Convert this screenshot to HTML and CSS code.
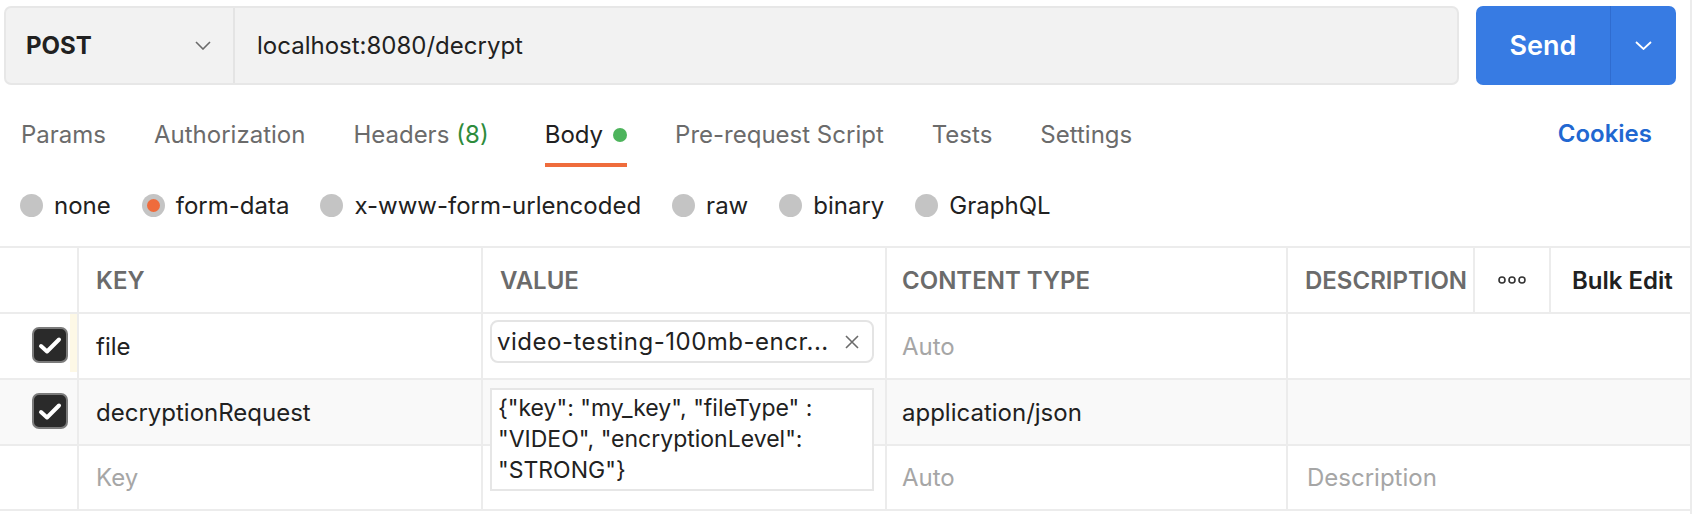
FILE: index.html
```html
<!DOCTYPE html>
<html lang="en">
<head>
<meta charset="utf-8">
<title>POST localhost:8080/decrypt</title>
<link rel="stylesheet" href="styles.css">
</head>
<body>
<div class="page">
  <div class="url-row">
    <div class="url-bar">
      <div class="method">
        <span class="method-name">POST</span>
        <svg class="chev" width="16" height="9" viewBox="0 0 16 9"><path d="M1 1 L8 8 L15 1" fill="none" stroke="#6b6b6b" stroke-width="1.6"/></svg>
      </div>
      <div class="url">localhost:8080/decrypt</div>
    </div>
    <div class="send">
      <span class="send-label">Send</span>
      <span class="send-arrow"><svg width="17" height="9" viewBox="0 0 17 9"><path d="M1 1 L8.5 8 L16 1" fill="none" stroke="#ffffff" stroke-width="1.8"/></svg></span>
    </div>
  </div>

  <div class="tabs">
    <div class="tab">Params</div>
    <div class="tab">Authorization</div>
    <div class="tab headers">Headers <span class="count">(8)</span></div>
    <div class="tab active">Body <span class="dot"></span></div>
    <div class="tab">Pre-request Script</div>
    <div class="tab">Tests</div>
    <div class="tab">Settings</div>
    <div class="tab-spacer"></div>
    <div class="cookies">Cookies</div>
  </div>

  <div class="body-types">
    <div class="radio"><span class="radio-dot"></span>none</div>
    <div class="radio"><span class="radio-dot selected"></span>form-data</div>
    <div class="radio"><span class="radio-dot"></span>x-www-form-urlencoded</div>
    <div class="radio"><span class="radio-dot"></span>raw</div>
    <div class="radio"><span class="radio-dot"></span>binary</div>
    <div class="radio"><span class="radio-dot"></span>GraphQL</div>
  </div>

  <div class="kv">
    <div class="cell head"></div>
    <div class="cell head">KEY</div>
    <div class="cell head">VALUE</div>
    <div class="cell head ct">CONTENT TYPE</div>
    <div class="cell head">DESCRIPTION</div>
    <div class="cell head center"><svg width="28" height="8" viewBox="0 0 28 8"><circle cx="4" cy="4" r="3" fill="none" stroke="#333" stroke-width="1.6"/><circle cx="14" cy="4" r="3" fill="none" stroke="#333" stroke-width="1.6"/><circle cx="24" cy="4" r="3" fill="none" stroke="#333" stroke-width="1.6"/></svg></div>
    <div class="cell head bulk">Bulk Edit</div>

    <div class="cell check-cell"><span class="check"><svg width="24" height="19" viewBox="0 0 24 19"><path d="M3 10 L9 15.5 L21 3.5" fill="none" stroke="#fff" stroke-width="4" stroke-linecap="round" stroke-linejoin="round"/></svg></span><span class="drag-strip"></span></div>
    <div class="cell">file</div>
    <div class="cell value-cell">
      <div class="file-chip"><span class="file-name">video-testing-100mb-encr...</span><svg class="chip-x" width="16" height="16" viewBox="0 0 16 16"><path d="M2 2 L14 14 M14 2 L2 14" fill="none" stroke="#6b6b6b" stroke-width="1.6"/></svg></div>
    </div>
    <div class="cell placeholder ct">Auto</div>
    <div class="cell span3"></div>

    <div class="cell check-cell alt"><span class="check"><svg width="24" height="19" viewBox="0 0 24 19"><path d="M3 10 L9 15.5 L21 3.5" fill="none" stroke="#fff" stroke-width="4" stroke-linecap="round" stroke-linejoin="round"/></svg></span></div>
    <div class="cell alt">decryptionRequest</div>
    <div class="cell alt value-cell">
      <div class="json-box">{"key": "my_key", "fileType" :<br>"VIDEO", "encryptionLevel":<br>"STRONG"}</div>
    </div>
    <div class="cell alt ct">application/json</div>
    <div class="cell alt span3"></div>

    <div class="cell"></div>
    <div class="cell placeholder">Key</div>
    <div class="cell"></div>
    <div class="cell placeholder ct">Auto</div>
    <div class="cell placeholder desc span3">Description</div>
  </div>
</div>
</body>
</html>
```

FILE: styles.css
```css
* { box-sizing: border-box; }

html, body {
  margin: 0;
  padding: 0;
  background: #ffffff;
}

body {
  font-family: Inter, "Noto Sans", "Liberation Sans", sans-serif;
  color: #212121;
  font-size: 24px;
}

.page {
  width: 1692px;
  height: 514px;
  border-right: 2px solid #ececec;
  overflow: hidden;
}

/* URL row */
.url-row {
  display: flex;
  gap: 17px;
  height: 79px;
  margin: 6px 14px 0 4px;
}

.url-bar {
  flex: 1;
  display: flex;
  background: #f2f2f2;
  border: 2px solid #e7e7e7;
  border-radius: 7px;
}

.method {
  width: 229px;
  display: flex;
  align-items: center;
  justify-content: space-between;
  padding: 0 22px 0 20px;
  border-right: 2px solid #e4e4e4;
}

.method-name {
  font-weight: 700;
  font-size: 24px;
  color: #212121;
}

.url {
  display: flex;
  align-items: center;
  padding-left: 22px;
  font-size: 24px;
  color: #212121;
}

.send {
  width: 200px;
  display: flex;
  background: #377be3;
  border-radius: 7px;
  color: #ffffff;
}

.send-label {
  width: 135px;
  display: flex;
  align-items: center;
  justify-content: center;
  font-size: 27px;
  font-weight: 600;
  border-right: 1px solid #2f6cd0;
}

.send-arrow {
  flex: 1;
  display: flex;
  align-items: center;
  justify-content: center;
}

/* Tabs */
.tabs {
  display: flex;
  align-items: flex-end;
  height: 82px;
  padding: 0 38px 0 21px;
  gap: 48px;
}

.tab {
  display: flex;
  align-items: center;
  gap: 10px;
  line-height: 31px;
  padding-bottom: 13px;
  border-bottom: 4px solid transparent;
  color: #6b6b6b;
  font-size: 24px;
}

.tab.headers {
  gap: 7px;
}

.tab.active {
  color: #212121;
  border-bottom-color: #ef6c3c;
  margin-left: 8px;
}

.count {
  color: #2e8b3c;
}

.dot {
  width: 14px;
  height: 14px;
  border-radius: 50%;
  background: #4db45c;
}

.tab-spacer {
  flex: 1;
}

.cookies {
  line-height: 30px;
  padding-bottom: 18px;
  color: #2167d1;
  font-weight: 600;
  font-size: 24px;
}

/* Body type radios */
.body-types {
  display: flex;
  align-items: center;
  height: 79px;
  padding: 0 0 2px 20px;
  gap: 31px;
}

.radio {
  display: flex;
  align-items: center;
  gap: 11px;
  font-size: 24px;
  color: #212121;
}

.radio-dot {
  width: 23px;
  height: 23px;
  border-radius: 50%;
  background: #c4c4c4;
  display: flex;
  align-items: center;
  justify-content: center;
}

.radio-dot.selected::after {
  content: "";
  width: 13px;
  height: 13px;
  border-radius: 50%;
  background: #ef6c3c;
}

/* Key/value table */
.kv {
  display: grid;
  grid-template-columns: 77px 402px 402px 399px 185px 74px 139px;
  grid-template-rows: 64px 64px 64px 63px;
  gap: 2px;
  padding: 2px 0;
  width: 1690px;
  background: #ececec;
}

.cell {
  background: #ffffff;
  display: flex;
  align-items: center;
  padding: 0 17px;
  font-size: 24px;
  color: #212121;
  min-width: 0;
}

.cell.alt {
  background: #f9f9f9;
}

.cell.head {
  font-weight: 600;
  color: #6b6b6b;
}

.cell.ct {
  padding-left: 15px;
}

.cell.center {
  justify-content: center;
  padding: 0;
}

.cell.bulk {
  color: #212121;
  padding-left: 21px;
}

.cell.placeholder {
  color: #a6a6a6;
}

.cell.desc {
  padding-left: 19px;
}

.span3 {
  grid-column: span 3;
}

.check-cell {
  justify-content: flex-end;
  padding: 0 9px 0 0;
  position: relative;
}

.check {
  width: 36px;
  height: 36px;
  border-radius: 7px;
  background: #2a2a2a;
  border: 2px solid #7b7b7b;
  display: flex;
  align-items: center;
  justify-content: center;
  margin-top: -2px;
}

.drag-strip {
  position: absolute;
  right: 0;
  top: 0;
  bottom: 6px;
  width: 7px;
  background: #fdf8e6;
}

.value-cell {
  padding: 0 11px 0 7px;
  overflow: visible;
}

.file-chip {
  width: 100%;
  height: 43px;
  display: flex;
  align-items: center;
  justify-content: space-between;
  border: 2px solid #e4e4e4;
  border-radius: 8px;
  padding: 0 12px 0 5px;
  margin-top: -9px;
  background: #ffffff;
}

.file-name {
  white-space: nowrap;
  overflow: hidden;
  letter-spacing: 0.5px;
}

.json-box {
  position: relative;
  z-index: 2;
  align-self: flex-start;
  width: 100%;
  margin-top: 8px;
  height: 103px;
  padding: 3px 6px;
  background: #ffffff;
  border: 2px solid #e6e6e6;
  line-height: 31px;
  font-size: 23px;
  color: #212121;
}
```
